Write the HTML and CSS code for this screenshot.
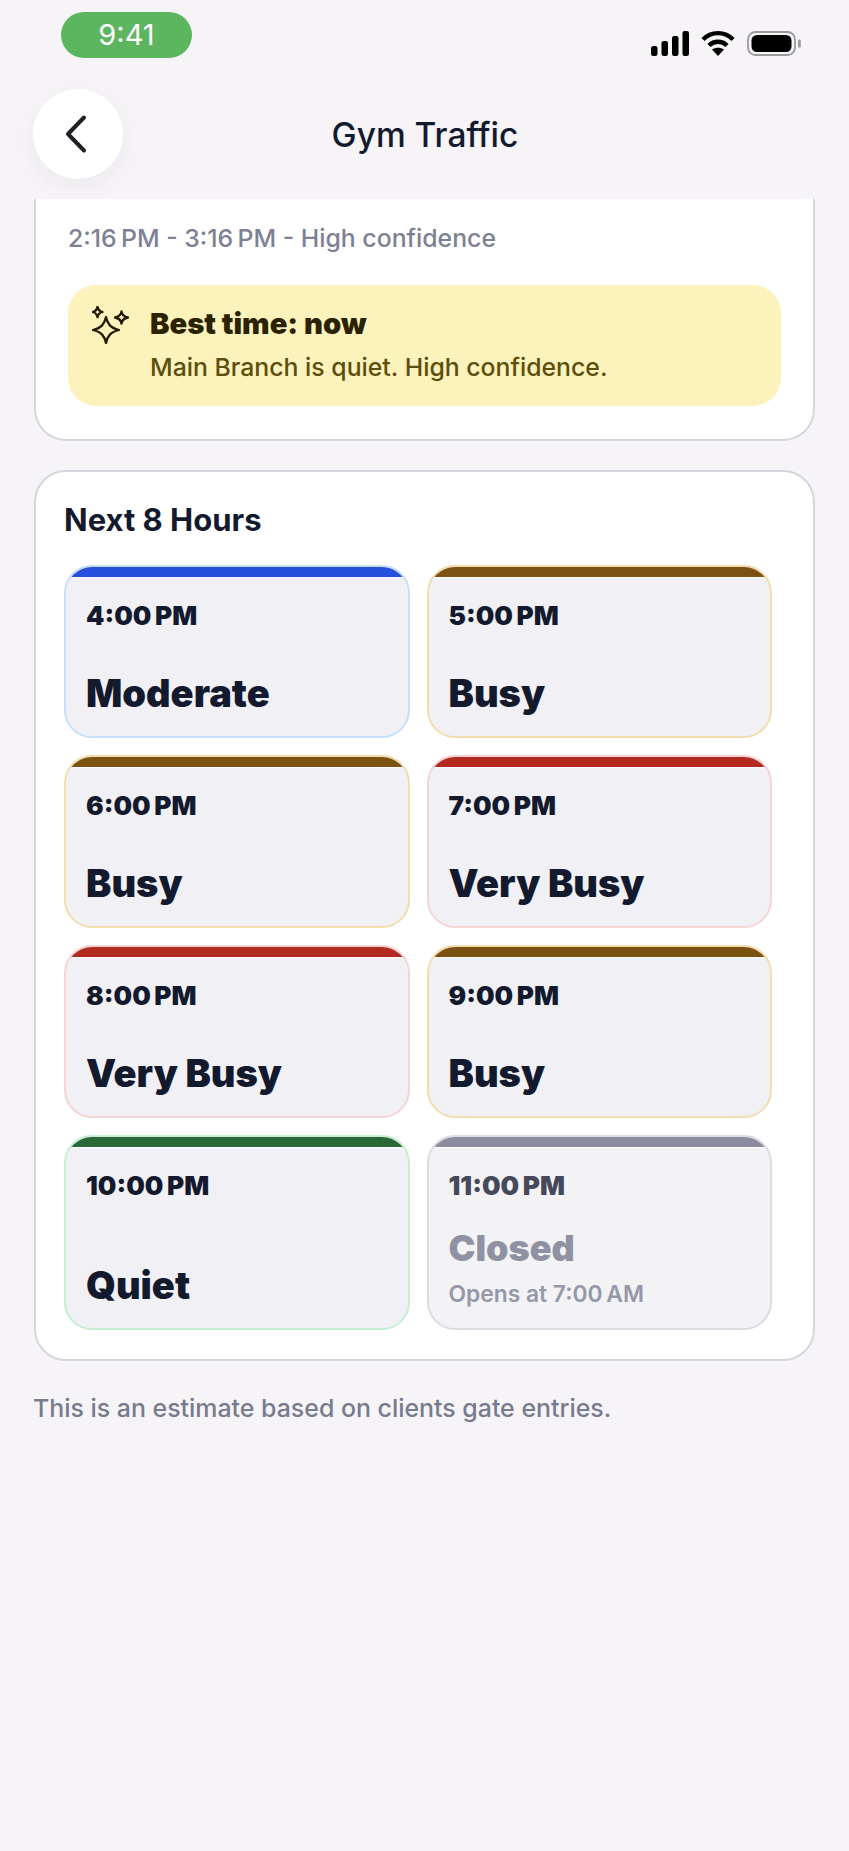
FILE: index.html
```html
<!DOCTYPE html>
<html lang="en">
<head>
    <meta charset="UTF-8">
    <meta name="viewport" content="width=device-width, initial-scale=1.0">
    <title>Gym Traffic</title>
    <link rel="stylesheet" href="styles.css">
</head>
<body>
<header class="top">
    <div class="status-bar">
        <div class="clock">9:41</div>
        <div class="status-icons">
            <svg width="38" height="25" viewBox="0 0 38 25" fill="#000">
                <rect x="0" y="15" width="6.500" height="10" rx="2.500"/>
                <rect x="10.500" y="10" width="6.500" height="15" rx="2.200"/>
                <rect x="21" y="5" width="6.500" height="20" rx="2.200"/>
                <rect x="31.500" y="0" width="6.500" height="25" rx="2.200"/>
            </svg>
            <svg width="34" height="26" viewBox="0 0 34 26" fill="none" stroke="#000" stroke-width="4.400">
                <path d="M2 9.500 C 10 1, 24 1, 32 9.500"/>
                <path d="M8 15.500 C 13 10.500, 21 10.500, 26 15.500"/>
                <path d="M11 19.500 L17 26 L23 19.500 C 19.500 17, 14.500 17, 11 19.500 Z" fill="#000" stroke="none"/>
            </svg>
            <svg width="55" height="25" viewBox="0 0 55 25">
                <rect x="1" y="1" width="47" height="23" rx="7.500" fill="none" stroke="#9a9a9e" stroke-width="1.800"/>
                <rect x="4.500" y="4" width="40" height="17" rx="5.500" fill="#000"/>
                <rect x="51" y="8.500" width="2.800" height="8" rx="1.300" fill="#9a9a9e"/>
            </svg>
        </div>
    </div>
    <div class="nav">
        <button class="back-btn" aria-label="Back">
            <svg width="22" height="40" viewBox="0 0 22 40" fill="none" stroke="#1f1f26" stroke-width="4" stroke-linecap="round" stroke-linejoin="round">
                <path d="M19 3.500 L3 20 L19 36.500"/>
            </svg>
        </button>
        <h1>Gym Traffic</h1>
    </div>
</header>

<main>
    <section class="card card-cut">
        <p class="range">2:16&#8201;PM - 3:16&#8201;PM - High confidence</p>
        <div class="tip">
            <svg class="tip-icon" width="38" height="38" viewBox="0 0 38 38" fill="none" stroke="#241c00" stroke-width="2.300" stroke-linejoin="round">
                <path d="M14 11 C 15.500 18, 18.500 22, 27 24 C 18.500 26, 15.500 30, 14 37 C 12.500 30, 9.500 26, 1 24 C 9.500 22, 12.500 18, 14 11 Z"/>
                <path d="M5.500 0.800 C 6 3.800, 7.500 5.300, 10.500 6 C 7.500 6.700, 6 8.200, 5.500 11.200 C 5 8.200, 3.500 6.700, 0.800 6 C 3.500 5.300, 5 3.800, 5.500 0.800 Z"/>
                <path d="M29.500 5.500 C 30 8.800, 32 10.800, 36 11.500 C 32 12.200, 30 14.200, 29.500 17.500 C 29 14.200, 27 12.200, 23 11.500 C 27 10.800, 29 8.800, 29.500 5.500 Z"/>
            </svg>
            <div>
                <div class="tip-title">Best time: now</div>
                <div class="tip-text">Main Branch is quiet. High confidence.</div>
            </div>
        </div>
    </section>

    <section class="card hours">
        <h2>Next 8 Hours</h2>
        <div class="hour-grid">
            <div class="hour moderate">
                <div class="hour-time">4:00&#8201;PM</div>
                <div class="hour-level">Moderate</div>
            </div>
            <div class="hour busy">
                <div class="hour-time">5:00&#8201;PM</div>
                <div class="hour-level">Busy</div>
            </div>
            <div class="hour busy">
                <div class="hour-time">6:00&#8201;PM</div>
                <div class="hour-level">Busy</div>
            </div>
            <div class="hour very-busy">
                <div class="hour-time">7:00&#8201;PM</div>
                <div class="hour-level">Very Busy</div>
            </div>
            <div class="hour very-busy">
                <div class="hour-time">8:00&#8201;PM</div>
                <div class="hour-level">Very Busy</div>
            </div>
            <div class="hour busy">
                <div class="hour-time">9:00&#8201;PM</div>
                <div class="hour-level">Busy</div>
            </div>
            <div class="hour quiet">
                <div class="hour-time">10:00&#8201;PM</div>
                <div class="hour-level">Quiet</div>
            </div>
            <div class="hour closed">
                <div class="hour-time">11:00&#8201;PM</div>
                <div class="hour-level">Closed</div>
                <div class="hour-note">Opens at 7:00&#8201;AM</div>
            </div>
        </div>
    </section>

    <p class="note">This is an estimate based on clients gate entries.</p>
</main>
</body>
</html>
```

FILE: styles.css
```css
* {
    box-sizing: border-box;
}

html, body {
    height: 100%;
}

body {
    margin: 0;
    font-family: 'Inter', sans-serif;
    background-color: #f6f4f7;
    color: #141a2e;
}

/* header */
.top {
    height: 199px;
    padding: 12px 34px 0 33px;
}

.status-bar {
    display: flex;
    justify-content: space-between;
    align-items: flex-start;
    padding-left: 28px;
    height: 77px;
}

.clock {
    width: 131px;
    height: 46px;
    border-radius: 23px;
    background-color: #5cb660;
    color: #fff;
    font-size: 29px;
    line-height: 46px;
    text-align: center;
}

.status-icons {
    display: flex;
    align-items: center;
    gap: 12px;
    margin-top: 18px;
    margin-right: 13px;
}

.nav {
    position: relative;
    display: flex;
    justify-content: center;
    align-items: center;
    height: 90px;
}

.nav h1 {
    margin: 2px 0 0 2px;
    font-size: 33.500px;
    font-weight: 500;
}

.back-btn {
    position: absolute;
    left: 0;
    top: 0;
    width: 90px;
    height: 90px;
    border: none;
    border-radius: 50%;
    background-color: #fff;
    box-shadow: 0 8px 24px rgba(30, 30, 50, 0.05);
    display: flex;
    align-items: center;
    justify-content: center;
    padding: 0 4px 0 0;
}

/* cards */
main {
    padding: 0 34px;
}

.card {
    width: 781px;
    background-color: #fff;
    border: 2px solid #d5d6de;
    border-radius: 32px;
}

.card-cut {
    height: 242px;
    border-top: none;
    border-top-left-radius: 0;
    border-top-right-radius: 0;
    padding: 23px 32px 0 32px;
}

.range {
    margin: 0;
    font-size: 24.800px;
    font-weight: 500;
    line-height: 32px;
    color: #7d8193;
}

.tip {
    display: flex;
    gap: 20px;
    height: 121px;
    margin-top: 31px;
    padding: 24px 24px;
    background-color: #fcf2bb;
    border-radius: 28px;
}

.tip-icon {
    flex: none;
    margin-top: -3px;
}

.tip-title {
    font-size: 29.200px;
    font-weight: 900;
    line-height: 30px;
    color: #2a2200;
}

.tip-text {
    margin-top: 13px;
    font-size: 24.800px;
    font-weight: 500;
    line-height: 30px;
    color: #5c4e0c;
}

.hours {
    height: 891px;
    margin-top: 29px;
    padding: 30px 41px 0 28px;
}

.hours h2 {
    margin: 0 0 27px;
    font-size: 31px;
    font-weight: 700;
    line-height: 36px;
}

.hour-grid {
    display: grid;
    grid-template-columns: 1fr 1fr;
    grid-template-rows: 173px 173px 173px 195px;
    gap: 17px 17px;
}

.hour {
    border: 2px solid;
    border-radius: 28px;
    background-color: #f1f1f5;
    overflow: hidden;
    display: flex;
    flex-direction: column;
}

.hour::before {
    content: "";
    flex: none;
    height: 10px;
    margin-bottom: 2px;
    background-color: var(--accent);
    border-bottom: 1px solid #fff;
}

.hour.moderate {
    border-color: #c6dffb;
    --accent: #2450dc;
}

.hour.busy {
    border-color: #f3dcae;
    --accent: #7c5212;
}

.hour.very-busy {
    border-color: #f6d3d4;
    --accent: #b32a20;
}

.hour.quiet {
    border-color: #c4efd1;
    --accent: #2a6a38;
}

.hour.closed {
    border-color: #dcdde3;
    background-color: #f3f3f6;
    --accent: #8b8d9e;
}

.hour-time {
    margin: 20px 0 0 20px;
    font-size: 26.200px;
    font-weight: 900;
    line-height: 32px;
}

.hour-level {
    margin: auto 0 21px 20px;
    font-size: 38px;
    font-weight: 900;
    line-height: 44px;
}

.closed .hour-time {
    color: #464959;
}

.closed .hour-level {
    margin: 24px 0 0 20px;
    font-size: 36px;
    color: #8f92a2;
}

.hour-note {
    margin: 10px 0 0 20px;
    font-size: 22.800px;
    font-weight: 600;
    line-height: 28px;
    color: #9598a8;
}

.note {
    margin: 32px 0 0 -1px;
    font-size: 24.900px;
    font-weight: 500;
    line-height: 30px;
    color: #777b8e;
}
```
